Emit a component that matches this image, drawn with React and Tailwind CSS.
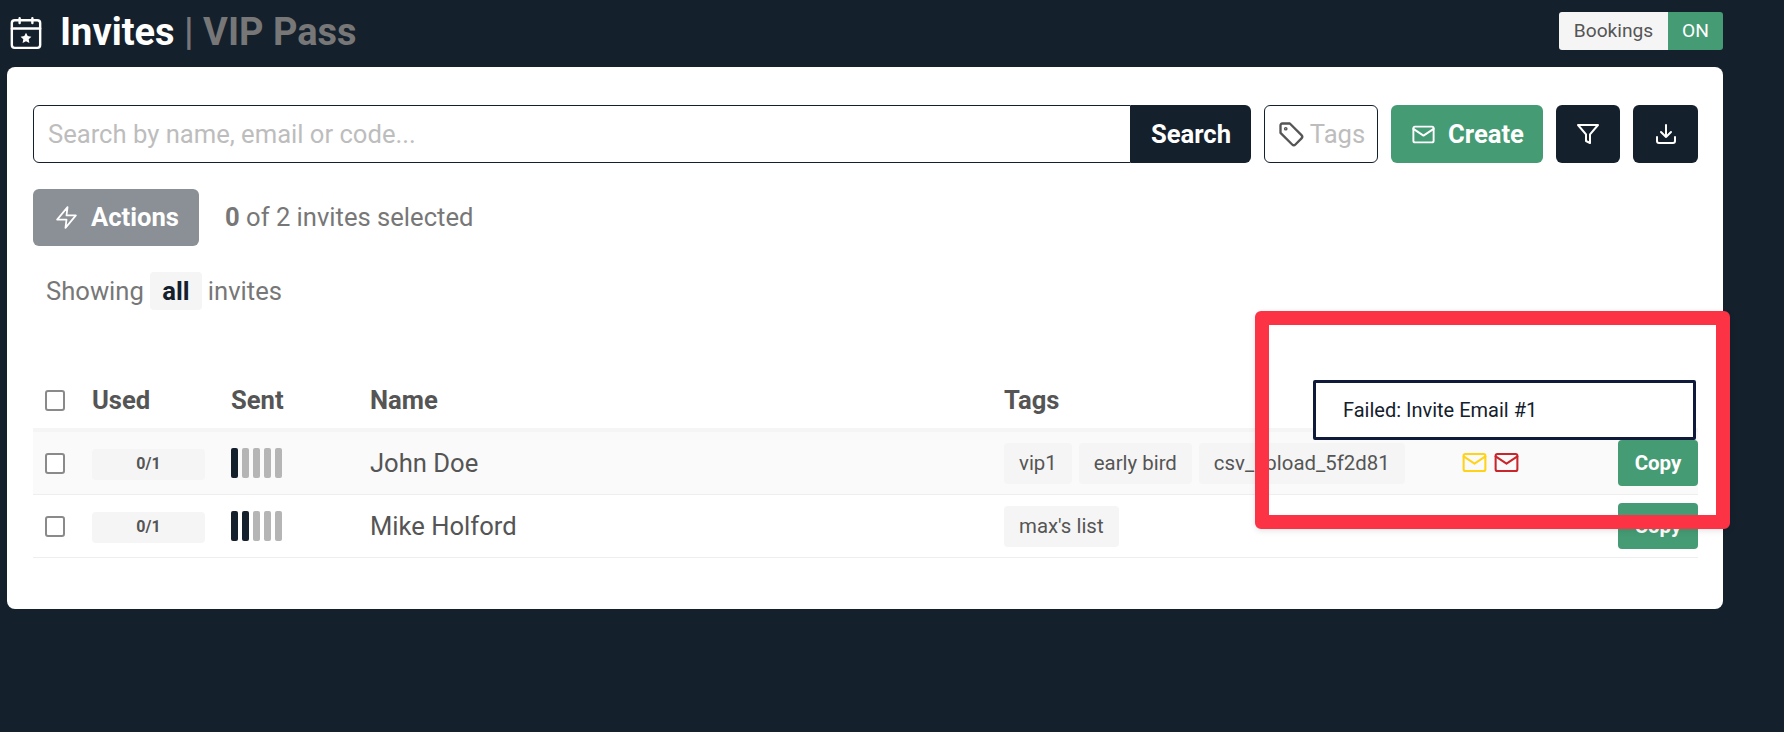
import React from 'react';

const font = { fontFamily: 'Roboto, sans-serif' };

function MailIcon({ className }) {
    return (
        <svg viewBox="0 0 24 24" fill="none" stroke="currentColor" strokeWidth="1.7" strokeLinecap="round" strokeLinejoin="round" className={className}>
            <rect x="3" y="5" width="18" height="14" rx="1.5" />
            <path d="M3 7l9 6l9-6" />
        </svg>
    );
}

function CalendarStarIcon({ className }) {
    return (
        <svg viewBox="0 0 24 24" fill="none" stroke="currentColor" strokeWidth="1.7" strokeLinecap="round" strokeLinejoin="round" className={className}>
            <rect x="2" y="3" width="20" height="19.500" rx="2" />
            <path d="M2 8.800h20M7.500 1.500v3.500M16.500 1.500v3.500" />
            <path d="M12 11.800l1.200 2.400 2.600.4-1.900 1.800.5 2.600-2.400-1.200-2.400 1.200.5-2.600-1.900-1.800 2.600-.4z" fill="currentColor" stroke="none" />
        </svg>
    );
}

function BoltIcon({ className }) {
    return (
        <svg viewBox="0 0 24 24" fill="none" stroke="currentColor" strokeWidth="1.7" strokeLinecap="round" strokeLinejoin="round" className={className}>
            <polygon points="13 2 3 14 12 14 11 22 21 10 12 10 13 2" />
        </svg>
    );
}

function TagIcon({ className }) {
    return (
        <svg viewBox="0 0 24 24" fill="none" stroke="currentColor" strokeWidth="2" strokeLinecap="round" strokeLinejoin="round" className={className}>
            <path d="M3 4.500A1.500 1.500 0 0 1 4.500 3H11l10 10a2 2 0 0 1 0 2.800L15.800 21a2 2 0 0 1-2.800 0L3 11z" />
            <circle cx="7.500" cy="7.500" r="0.600" />
        </svg>
    );
}

function FilterIcon({ className }) {
    return (
        <svg viewBox="0 0 24 24" fill="none" stroke="currentColor" strokeWidth="2" strokeLinecap="round" strokeLinejoin="round" className={className}>
            <polygon points="22 3 2 3 10 12.460 10 19 14 21 14 12.460 22 3" />
        </svg>
    );
}

function DownloadIcon({ className }) {
    return (
        <svg viewBox="0 0 24 24" fill="none" stroke="currentColor" strokeWidth="2" strokeLinecap="round" strokeLinejoin="round" className={className}>
            <path d="M3 15v4a2 2 0 0 0 2 2h14a2 2 0 0 0 2-2v-4" />
            <path d="M7 10l5 5l5-5M12 15V3" />
        </svg>
    );
}

function Checkbox() {
    return <div className="h-[21px] w-[20px] rounded-[3px] border-2 border-[#8a8a8a] bg-white" />;
}

function SentBars({ count }) {
    return (
        <div className="flex gap-[4px]">
            {[0, 1, 2, 3, 4].map((i) => (
                <div key={i} className={`h-[30px] w-[7px] rounded-[2px] ${i < count ? 'bg-[#15202d]' : 'bg-[#b5b5b5]'}`} />
            ))}
        </div>
    );
}

function Tag({ children }) {
    return <div className="flex h-[41px] items-center rounded-[4px] bg-[#f5f5f5] px-[15px] text-[20.4px] text-[#555555]">{children}</div>;
}

function Row({ name, sent, tags, mails, className }) {
    return (
        <div className={`flex h-[63px] items-center border-b border-[#eeeeee] ${className}`}>
            <div className="w-[59px] pl-[12px]">
                <Checkbox />
            </div>
            <div className="w-[139px]">
                <div className="mt-[2px] flex h-[31px] w-[113px] items-center justify-center rounded-[4px] bg-[#f5f5f5] text-[16px] font-bold text-[#555555]">0/1</div>
            </div>
            <div className="w-[139px]">
                <SentBars count={sent} />
            </div>
            <div className="w-[634px] text-[25.6px] text-[#555555]">{name}</div>
            <div className="flex w-[456px] gap-[7px]">
                {tags.map((tag) => (
                    <Tag key={tag}>{tag}</Tag>
                ))}
            </div>
            <div className="-mt-[2px] flex w-[158px] gap-[3px]">
                {mails && (
                    <>
                        <MailIcon className="h-[29px] w-[29px] text-[#ffd31a]" />
                        <MailIcon className="h-[29px] w-[29px] text-[#c9252d]" />
                    </>
                )}
            </div>
            <button className="h-[46px] w-[80px] rounded-[4px] bg-[#459b74] text-[20.5px] font-bold text-white">Copy</button>
        </div>
    );
}

export default function App() {
    return (
        <div className="min-h-[732px] overflow-hidden bg-[#15202d]" style={font}>
            <div className="flex h-[67px] items-center justify-between pb-[2px] pl-[9px] pr-[61px]">
                <div className="flex items-center gap-[17px]">
                    <CalendarStarIcon className="h-[34px] w-[34px] text-white" />
                    <h1 className="text-[38px] font-bold text-white">
                        Invites <span className="font-bold text-[#777777]">| VIP Pass</span>
                    </h1>
                </div>
                <div className="mb-[3px] flex h-[38px] overflow-hidden rounded-[3px] text-[19.2px]">
                    <div className="flex w-[109px] items-center justify-center bg-[#f5f5f5] text-[#555555]">Bookings</div>
                    <div className="flex w-[55px] items-center justify-center bg-[#459b74] text-white">ON</div>
                </div>
            </div>

            <div className="relative ml-[7px] h-[542px] w-[1716px] rounded-[8px] bg-white pl-[26px] pr-[25px] pt-[38px]">
                <div className="flex h-[58px] gap-[13px]">
                    <div className="flex flex-1">
                        <input
                            placeholder="Search by name, email or code..."
                            className="h-full flex-1 rounded-l-[6px] border border-[#15202d] bg-white px-[14px] text-[25.6px] outline-none placeholder:text-[#bdbdbd]"
                        />
                        <button className="w-[120px] rounded-r-[6px] bg-[#15202d] text-[25.6px] font-bold text-white">Search</button>
                    </div>
                    <div className="flex w-[114px] items-center justify-center gap-[5px] rounded-[6px] border border-[#15202d] text-[25.6px] text-[#bdbdbd]">
                        <TagIcon className="h-[28px] w-[28px] text-[#555555]" />
                        Tags
                    </div>
                    <button className="flex w-[152px] items-center justify-center gap-[11px] rounded-[6px] bg-[#459b74] text-[25.6px] font-bold text-white">
                        <MailIcon className="h-[27px] w-[27px]" />
                        Create
                    </button>
                    <button className="flex w-[64px] items-center justify-center rounded-[6px] bg-[#15202d] text-white">
                        <FilterIcon className="h-[24px] w-[24px]" />
                    </button>
                    <button className="flex w-[65px] items-center justify-center rounded-[6px] bg-[#15202d] text-white">
                        <DownloadIcon className="h-[24px] w-[24px]" />
                    </button>
                </div>

                <div className="mt-[26px] flex items-center gap-[26px]">
                    <button className="flex h-[57px] w-[166px] items-center justify-center gap-[12px] rounded-[6px] bg-[#8b8f96] pl-[1px] text-[25.6px] font-bold text-white">
                        <BoltIcon className="h-[25px] w-[25px]" />
                        Actions
                    </button>
                    <div className="text-[25.6px] text-[#777777]">
                        <span className="font-bold">0</span> of 2 invites selected
                    </div>
                </div>

                <div className="mt-[26px] flex items-center pl-[13px] text-[25.6px] text-[#777777]">
                    Showing
                    <span className="mx-[6px] flex h-[38px] w-[52px] items-center justify-center rounded-[4px] bg-[#f5f5f5] font-bold text-[#15202d]">all</span>
                    invites
                </div>

                <div className="mt-[80px] flex h-[38px] items-center pb-[18px] text-[25.6px] font-bold text-[#555555]">
                    <div className="w-[59px] pl-[12px]">
                        <Checkbox />
                    </div>
                    <div className="w-[139px]">Used</div>
                    <div className="w-[139px]">Sent</div>
                    <div className="w-[634px]">Name</div>
                    <div>Tags</div>
                </div>
                <div className="border-t-4 border-[#f5f5f5]">
                    <Row name="John Doe" sent={1} tags={['vip1', 'early bird', 'csv_upload_5f2d81']} mails className="bg-[#fafafa]" />
                    <Row name="Mike Holford" sent={2} tags={["max's list"]} className="bg-white" />
                </div>

                {/* annotation drawn over the table */}
                <div className="absolute left-[1248px] top-[244px] h-[218px] w-[475px] rounded-[6px] border-[14px] border-[#fc3344] shadow-[0_2px_6px_rgba(0,0,0,0.1)]" />
                <div className="absolute left-[1306px] top-[313px] flex h-[60px] w-[383px] items-center rounded-[2px] border-[3px] border-[#101a3a] bg-white pl-[27px] text-[20px] text-[#15202d]">
                    Failed: Invite Email #1
                </div>
            </div>
        </div>
    );
}
